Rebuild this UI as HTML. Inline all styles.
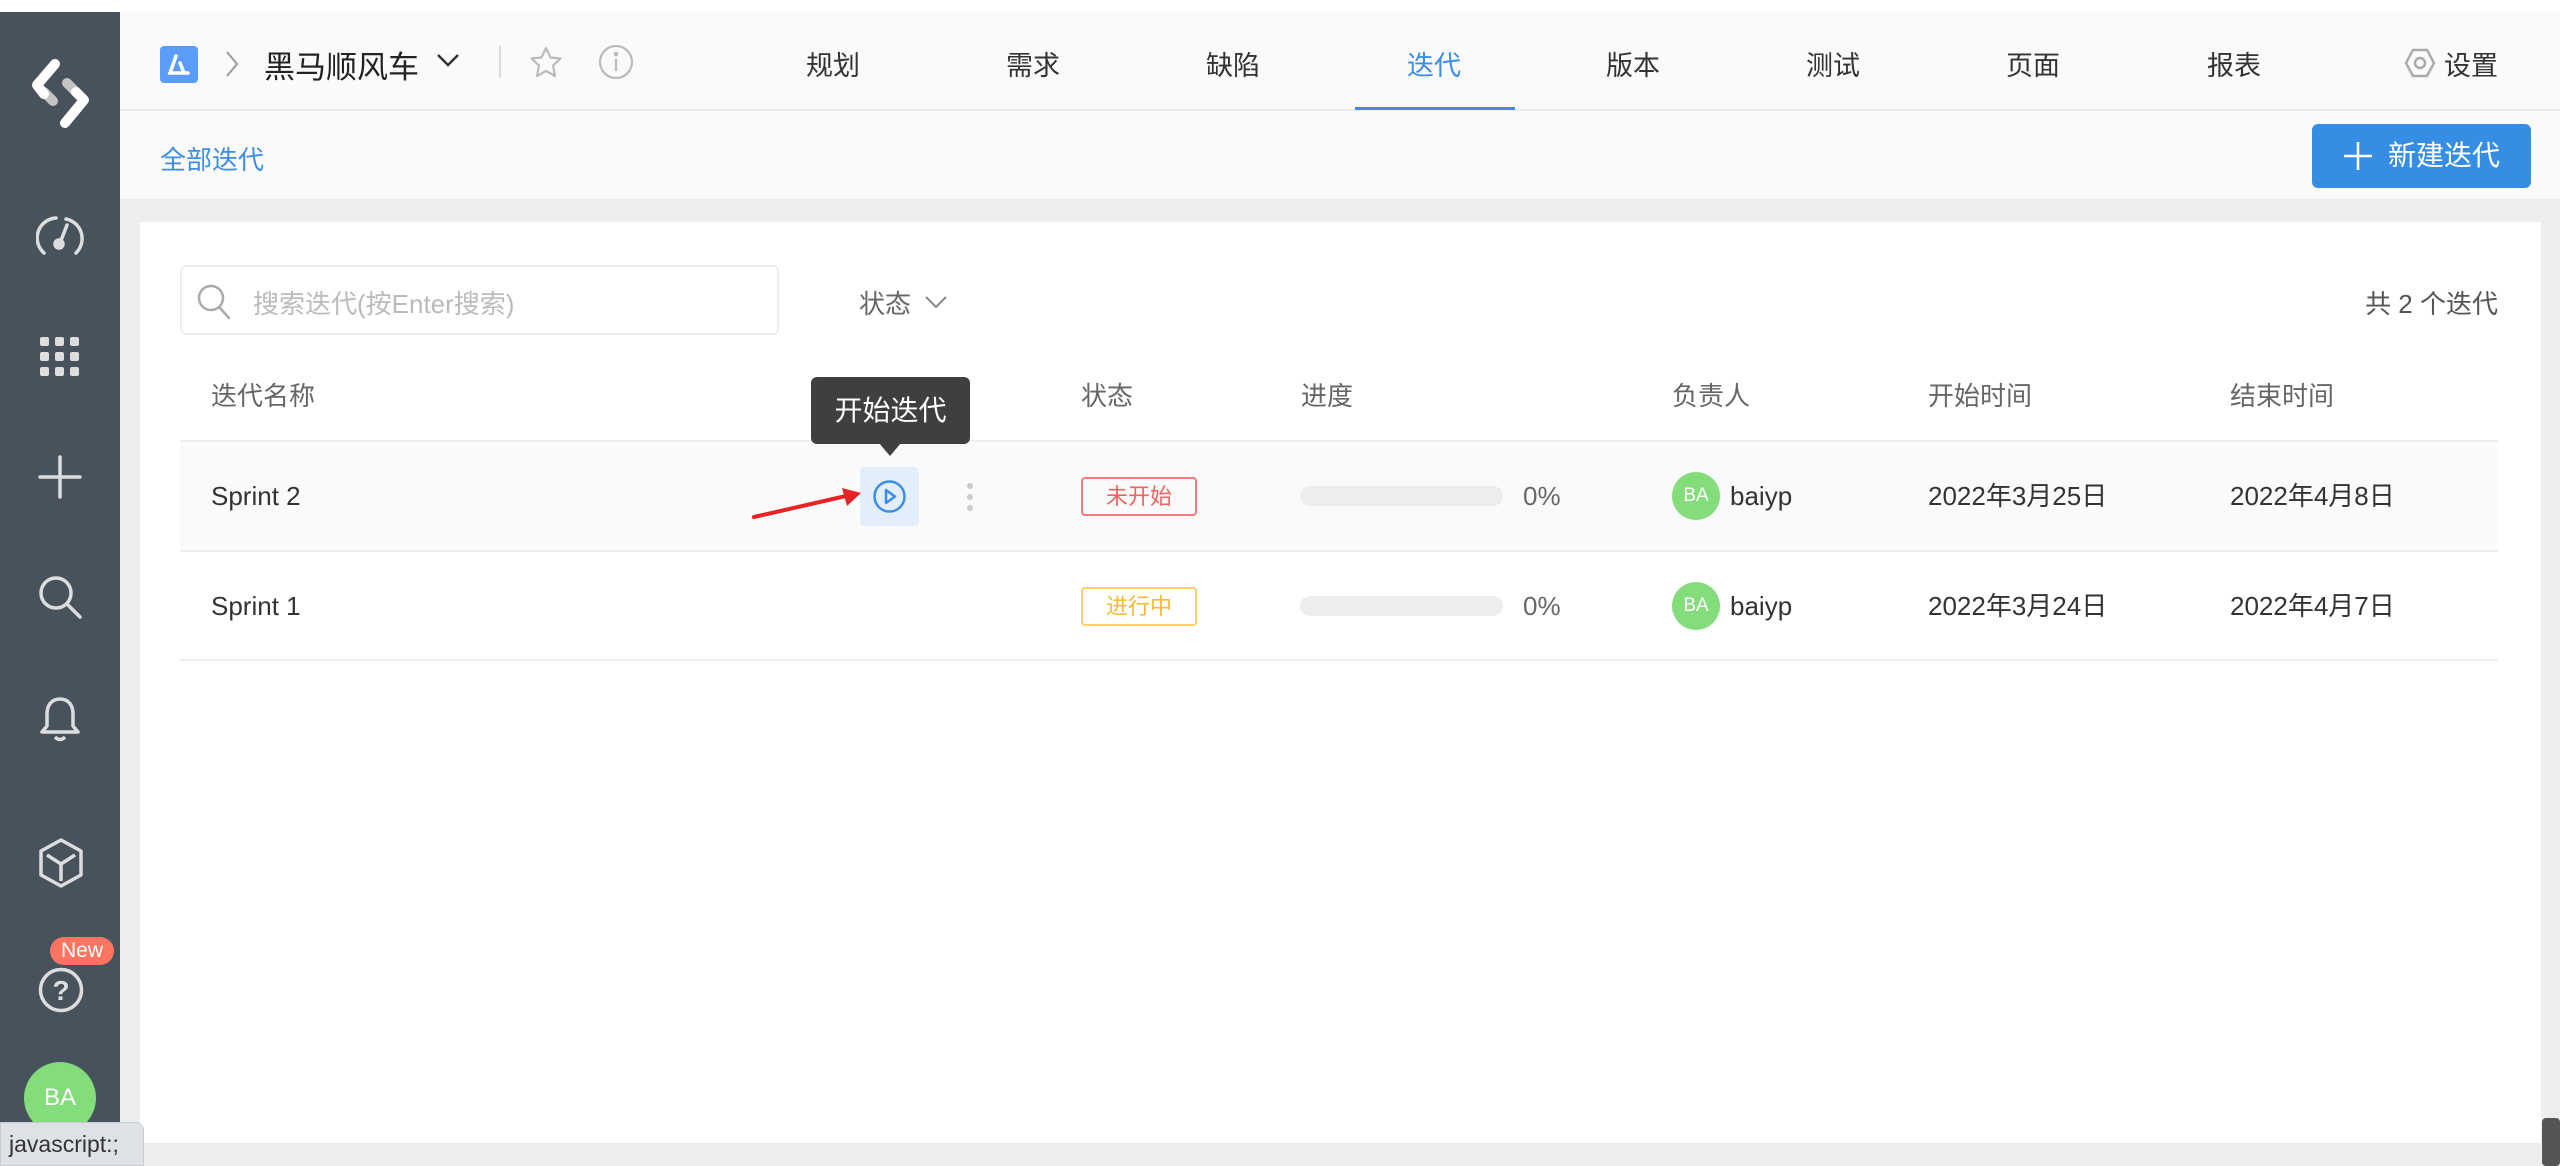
<!DOCTYPE html>
<html><head><meta charset="utf-8"><style>
*{margin:0;padding:0;box-sizing:border-box}
body{width:2560px;height:1166px;overflow:hidden;background:#fff;font-family:"Liberation Sans","Noto Sans CJK SC",sans-serif;color:#333;position:relative}
.a{position:absolute}
.side{left:0;top:12px;width:120px;height:1154px;background:#47525d}
.hdr{left:120px;top:12px;width:2440px;height:99px;background:#fafafa;border-bottom:2px solid #ececec}
.sub{left:120px;top:111px;width:2440px;height:88px;background:#fafafa}
.bg{left:120px;top:199px;width:2440px;height:967px;background:#ededed}
.card{left:140px;top:222px;width:2401px;height:921px;background:#fff}
.nav{top:44px;font-size:27px;color:#333}
.th{top:376px;font-size:26px;color:#666}
.td{font-size:26px;color:#333;height:32px;line-height:32px}
svg{position:absolute}
</style></head><body>
<div class="a side"></div>
<div class="a hdr"></div>
<div class="a sub"></div>
<div class="a bg"></div>
<div class="a card"></div>

<!-- sidebar icons -->
<svg style="left:0;top:0" width="120" height="150" viewBox="0 0 120 150" fill="none" stroke-linecap="round" stroke-linejoin="round" stroke-width="10"><path d="M44 92L53 101" stroke="#c4c4c4"/><path d="M67 83L76 92" stroke="#c4c4c4"/><path d="M55 64L37 85L44 94" stroke="#fff"/><path d="M76 92L84 100L65 123" stroke="#fff"/></svg>
<svg style="left:36px;top:213px" width="48" height="48" viewBox="0 0 48 48" fill="none" stroke="#ddd" stroke-width="3.5" stroke-linecap="round"><path d="M8 40 A20 20 0 0 1 20 5"/><path d="M40 40 A20 20 0 0 0 30 6"/><path d="M24 30 L31 12"/><circle cx="23" cy="31" r="4" fill="#ddd"/></svg>
<svg style="left:40px;top:337px" width="40" height="40" viewBox="0 0 40 40" fill="#ddd"><rect x="0" y="0" width="9" height="9" rx="2"/><rect x="15" y="0" width="9" height="9" rx="2"/><rect x="30" y="0" width="9" height="9" rx="2"/><rect x="0" y="15" width="9" height="9" rx="2"/><rect x="15" y="15" width="9" height="9" rx="2"/><rect x="30" y="15" width="9" height="9" rx="2"/><rect x="0" y="30" width="9" height="9" rx="2"/><rect x="15" y="30" width="9" height="9" rx="2"/><rect x="30" y="30" width="9" height="9" rx="2"/></svg>
<svg style="left:37px;top:454px" width="46" height="46" viewBox="0 0 46 46" stroke="#ddd" stroke-width="3.5" stroke-linecap="round"><path d="M23 3V43M3 23H43"/></svg>
<svg style="left:36px;top:573px" width="48" height="48" viewBox="0 0 48 48" fill="none" stroke="#ddd" stroke-width="3.5" stroke-linecap="round"><circle cx="20" cy="20" r="15"/><path d="M31 31L44 44"/></svg>
<svg style="left:38px;top:695px" width="44" height="48" viewBox="0 0 44 48" fill="none" stroke="#ddd" stroke-width="3.5" stroke-linejoin="round"><path d="M22 4C13 4 9 11 9 19V31L4 37H40L35 31V19C35 11 31 4 22 4Z"/><path d="M17 42Q22 47 27 42"/></svg>
<svg style="left:38px;top:838px" width="46" height="50" viewBox="0 0 46 50" fill="none" stroke="#ddd" stroke-width="3.5" stroke-linejoin="round"><path d="M23 2L43 13V37L23 48L3 37V13Z"/><path d="M9 17L23 26L37 17M23 26V43"/></svg>
<svg style="left:38px;top:967px" width="46" height="46" viewBox="0 0 46 46"><circle cx="23" cy="23" r="20.5" fill="none" stroke="#ddd" stroke-width="3.5"/><text x="23" y="33" text-anchor="middle" font-size="28" font-family="Liberation Sans" fill="#ddd" font-weight="bold">?</text></svg>
<div class="a" style="left:50px;top:937px;width:64px;height:28px;background:#ff7461;border-radius:14px;color:#fff;font-size:21px;text-align:center;line-height:28px">New</div>
<div class="a" style="left:24px;top:1062px;width:72px;height:72px;border-radius:50%;background:#82dd7a;color:#fff;font-size:24px;text-align:center;line-height:72px">BA</div>
<div class="a" style="left:0;top:1122px;width:144px;height:44px;background:#dee1e6;border:1px solid #c8ccd2;border-radius:0 8px 0 0;font-size:23px;color:#333;line-height:42px;padding-left:8px">javascript:;</div>

<!-- header -->
<div class="a" style="left:160px;top:46px;width:38px;height:37px;background:#5b9cfb;border-radius:4px"></div>
<svg style="left:160px;top:46px" width="38" height="37" viewBox="0 0 38 37" fill="none" stroke="#fff" stroke-width="3.5" stroke-linecap="round"><path d="M16 10L10 27H28M20 17L24 27"/></svg>
<svg style="left:224px;top:50px" width="16" height="28" viewBox="0 0 16 28" fill="none" stroke="#999" stroke-width="2"><path d="M3 2L13 14L3 26"/></svg>
<div class="a" style="left:264px;top:42px;font-size:31px;color:#222">黑马顺风车</div>
<svg style="left:436px;top:52px" width="24" height="16" viewBox="0 0 24 16" fill="none" stroke="#333" stroke-width="2.5"><path d="M2 3L12 13L22 3"/></svg>
<div class="a" style="left:499px;top:46px;width:2px;height:32px;background:#ddd"></div>
<svg style="left:529px;top:46px" width="34" height="32" viewBox="0 0 34 32" fill="none" stroke="#bbb" stroke-width="2.2" stroke-linejoin="round"><path d="M17 2L21.5 11.5L31.5 12.5L24 19.5L26 30L17 25L8 30L10 19.5L2.5 12.5L12.5 11.5Z"/></svg>
<svg style="left:598px;top:44px" width="36" height="36" viewBox="0 0 36 36" fill="none" stroke="#bbb" stroke-width="2.2"><circle cx="18" cy="18" r="16"/><path d="M18 15V27"/><circle cx="18" cy="10" r="1.3" fill="#bbb"/></svg>
<div class="a nav" style="left:806px">规划</div>
<div class="a nav" style="left:1006px">需求</div>
<div class="a nav" style="left:1206px">缺陷</div>
<div class="a nav" style="left:1407px;color:#3b8ee3">迭代</div>
<div class="a" style="left:1355px;top:107px;width:160px;height:3px;background:#3b8ee3"></div>
<div class="a nav" style="left:1606px">版本</div>
<div class="a nav" style="left:1806px">测试</div>
<div class="a nav" style="left:2006px">页面</div>
<div class="a nav" style="left:2207px">报表</div>
<svg style="left:2404px;top:48px" width="32" height="30" viewBox="0 0 32 30" fill="none" stroke="#aaa" stroke-width="2.4"><path d="M9 2H23L30 15L23 28H9L2 15Z"/><circle cx="16" cy="15" r="5"/></svg>
<div class="a nav" style="left:2444px">设置</div>

<!-- sub header -->
<div class="a" style="left:160px;top:140px;font-size:26px;color:#3b8ee3">全部迭代</div>
<div class="a" style="left:2312px;top:124px;width:219px;height:64px;background:#358ee4;border-radius:6px;color:#fff;font-size:28px;line-height:64px;padding-left:76px">新建迭代</div>
<svg style="left:2343px;top:141px" width="30" height="30" viewBox="0 0 30 30" stroke="#fff" stroke-width="2.5"><path d="M15 1V29M1 15H29"/></svg>

<!-- toolbar -->
<div class="a" style="left:180px;top:265px;width:599px;height:70px;border:2px solid #eee;border-radius:6px"></div>
<svg style="left:196px;top:283px" width="36" height="38" viewBox="0 0 36 38" fill="none" stroke="#aaa" stroke-width="2.5" stroke-linecap="round"><circle cx="15" cy="15" r="12"/><path d="M24 25L33 35"/></svg>
<div class="a" style="left:253px;top:284px;font-size:26px;color:#bbb">搜索迭代(按Enter搜索)</div>
<div class="a" style="left:859px;top:284px;font-size:26px;color:#666">状态</div>
<svg style="left:924px;top:294px" width="24" height="16" viewBox="0 0 24 16" fill="none" stroke="#888" stroke-width="2"><path d="M2 3L12 13L22 3"/></svg>
<div class="a" style="left:2300px;top:284px;font-size:26px;color:#555;width:198px;text-align:right">共 2 个迭代</div>

<!-- table -->
<div class="a th" style="left:211px">迭代名称</div>
<div class="a th" style="left:1081px">状态</div>
<div class="a th" style="left:1301px">进度</div>
<div class="a th" style="left:1672px">负责人</div>
<div class="a th" style="left:1928px">开始时间</div>
<div class="a th" style="left:2230px">结束时间</div>
<div class="a" style="left:180px;top:440px;width:2318px;height:2px;background:#eee"></div>
<div class="a" style="left:180px;top:442px;width:2318px;height:108px;background:#fafafa"></div>
<div class="a" style="left:180px;top:550px;width:2318px;height:2px;background:#eee"></div>
<div class="a" style="left:180px;top:659px;width:2318px;height:2px;background:#eee"></div>

<div class="a td" style="left:211px;top:480px">Sprint 2</div>
<div class="a td" style="left:211px;top:590px">Sprint 1</div>
<div class="a" style="left:860px;top:467px;width:59px;height:59px;background:#e3eefb;border-radius:4px"></div>
<svg style="left:872px;top:479px" width="35" height="35" viewBox="0 0 35 35" fill="none" stroke="#3b8ee3" stroke-width="2.5" stroke-linejoin="round"><circle cx="17.5" cy="17.5" r="15"/><path d="M14 11V24L23 17.5Z"/></svg>
<svg style="left:964px;top:482px" width="12" height="30" viewBox="0 0 12 30" fill="#ccc"><circle cx="6" cy="4" r="3"/><circle cx="6" cy="15" r="3"/><circle cx="6" cy="26" r="3"/></svg>
<svg style="left:750px;top:486px" width="115" height="36" viewBox="0 0 115 36"><path d="M4 31L96 10" stroke="#e82323" stroke-width="4" stroke-linecap="round"/><path d="M111 7L92 2L97 20Z" fill="#e82323"/></svg>

<div class="a" style="left:811px;top:377px;width:159px;height:67px;background:#3f3f3f;border-radius:6px;color:#fff;font-size:28px;line-height:67px;text-align:center">开始迭代</div>
<div class="a" style="left:879px;top:443px;width:0;height:0;border-left:11px solid transparent;border-right:11px solid transparent;border-top:13px solid #3f3f3f"></div>

<div class="a" style="left:1081px;top:477px;width:116px;height:39px;border:2px solid #f57a7a;border-radius:4px;color:#f56060;font-size:22px;text-align:center;line-height:35px">未开始</div>
<div class="a" style="left:1081px;top:587px;width:116px;height:39px;border:2px solid #fbcf6a;border-radius:4px;color:#f7b93a;font-size:22px;text-align:center;line-height:35px">进行中</div>
<div class="a" style="left:1300px;top:486px;width:203px;height:20px;background:#ededed;border-radius:10px"></div>
<div class="a" style="left:1300px;top:596px;width:203px;height:20px;background:#ededed;border-radius:10px"></div>
<div class="a td" style="left:1523px;top:480px;color:#666">0%</div>
<div class="a td" style="left:1523px;top:590px;color:#666">0%</div>

<div class="a" style="left:1672px;top:472px;width:48px;height:48px;border-radius:50%;background:#82dd7a;color:#fff;font-size:19px;text-align:center;line-height:48px">BA</div>
<div class="a" style="left:1672px;top:582px;width:48px;height:48px;border-radius:50%;background:#82dd7a;color:#fff;font-size:19px;text-align:center;line-height:48px">BA</div>
<div class="a td" style="left:1730px;top:480px">baiyp</div>
<div class="a td" style="left:1730px;top:590px">baiyp</div>
<div class="a td" style="left:1928px;top:480px">2022年3月25日</div>
<div class="a td" style="left:1928px;top:590px">2022年3月24日</div>
<div class="a td" style="left:2230px;top:480px">2022年4月8日</div>
<div class="a td" style="left:2230px;top:590px">2022年4月7日</div>
<div class="a" style="left:2542px;top:1118px;width:18px;height:48px;background:#555;border-radius:4px"></div>
</body></html>
